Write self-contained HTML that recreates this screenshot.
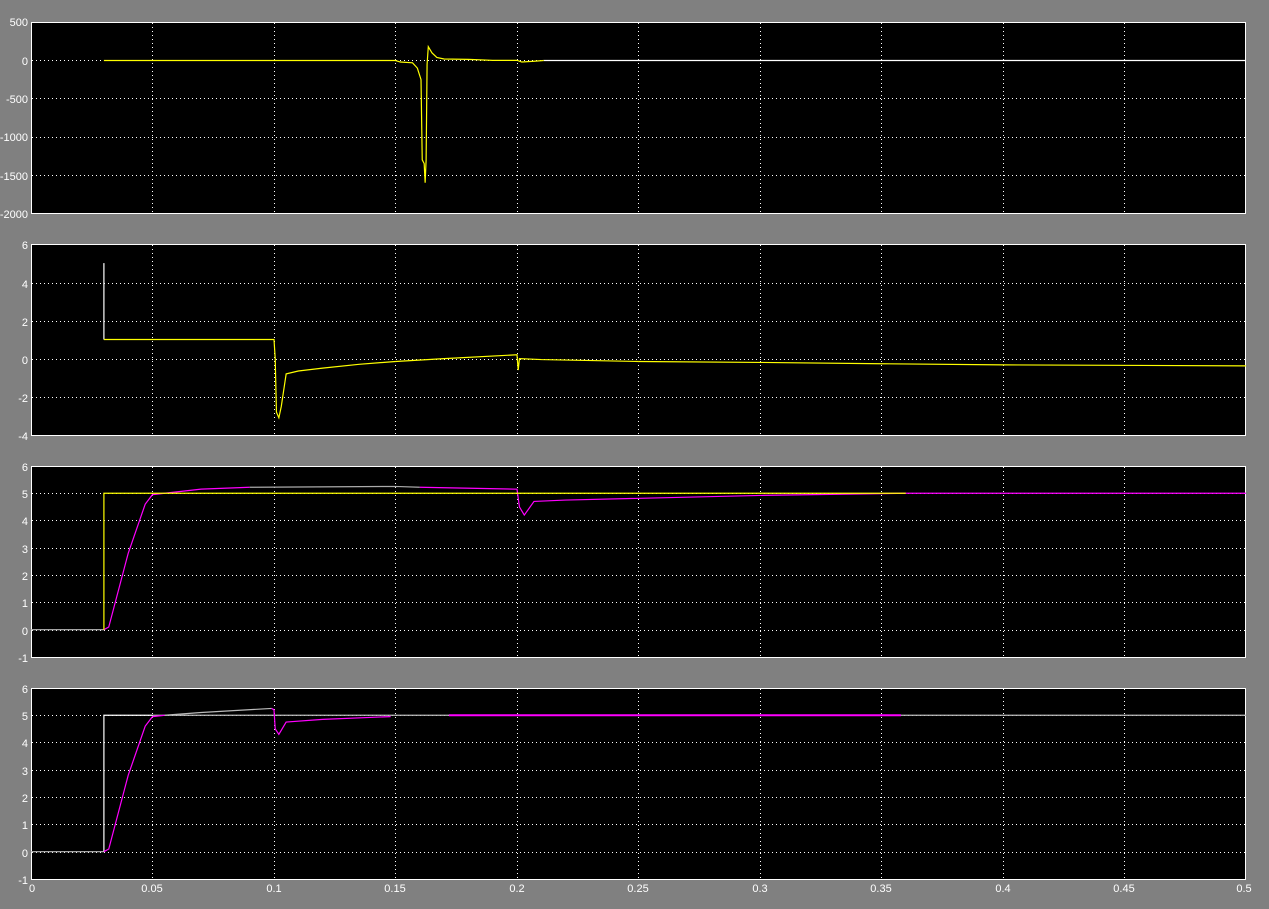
<!DOCTYPE html>
<html><head><meta charset="utf-8"><style>
html,body{margin:0;padding:0;background:#808080;}
svg{display:block}
text{font-family:"Liberation Sans",sans-serif;font-size:11px;fill:#fff}
.g{stroke:#fff;stroke-width:1;stroke-dasharray:1 3;fill:none}
path,line{vector-effect:non-scaling-stroke}
</style></head><body>
<svg width="1269" height="909" viewBox="0 0 1269 909" xmlns="http://www.w3.org/2000/svg">
<rect width="1269" height="909" fill="#808080"/>
<g fill="#000" stroke="#fff" stroke-width="1">
<rect x="31.5" y="22.5" width="1214" height="191"/>
<rect x="31.5" y="244.5" width="1214" height="191"/>
<rect x="31.5" y="466.5" width="1214" height="191"/>
<rect x="31.5" y="688.5" width="1214" height="191"/>
</g>
<g class="g">
<path d="M152.5 23V213M274.5 23V213M395.5 23V213M517.5 23V213M638.5 23V213M760.5 23V213M881.5 23V213M1003.5 23V213M1124.5 23V213"/>
<path d="M152.5 245V435M274.5 245V435M395.5 245V435M517.5 245V435M638.5 245V435M760.5 245V435M881.5 245V435M1003.5 245V435M1124.5 245V435"/>
<path d="M152.5 467V657M274.5 467V657M395.5 467V657M517.5 467V657M638.5 467V657M760.5 467V657M881.5 467V657M1003.5 467V657M1124.5 467V657"/>
<path d="M152.5 689V879M274.5 689V879M395.5 689V879M517.5 689V879M638.5 689V879M760.5 689V879M881.5 689V879M1003.5 689V879M1124.5 689V879"/>
<path d="M32 60.5H1245M32 98.5H1245M32 137.5H1245M32 175.5H1245"/>
<path d="M32 283.5H1245M32 321.5H1245M32 359.5H1245M32 397.5H1245"/>
<path d="M32 493.5H1245M32 520.5H1245M32 548.5H1245M32 575.5H1245M32 602.5H1245M32 630.5H1245"/>
<path d="M32 715.5H1245M32 742.5H1245M32 770.5H1245M32 797.5H1245M32 824.5H1245M32 852.5H1245"/>
</g>
<g transform="translate(31,60.5) scale(2430,-0.0764)" fill="none" stroke-width="1.2">
<path stroke="#ffff00" d="M0.03 0 L0.15 0 L0.152 -20 L0.157 -30 L0.159 -100 L0.1605 -250 L0.161 -1300 L0.1618 -1350 L0.1622 -1600 L0.1626 -1300 L0.163 -50 L0.1635 180 L0.165 100 L0.167 40 L0.17 20 L0.18 15 L0.19 2 L0.2 2 L0.202 -20 L0.207 -10 L0.211 0"/>
<path stroke="#fff" d="M0.211 0 L0.5 0"/>
</g>
<g transform="translate(31,358.6) scale(2430,-19.1)" fill="none" stroke-width="1.2">
<path stroke="#fff" d="M0.03 5 L0.03 1"/>
<path stroke="#ffff00" d="M0.03 1 L0.1 1 L0.1005 0 L0.101 -2.8 L0.102 -3.1 L0.103 -2.5 L0.105 -0.8 L0.11 -0.65 L0.12 -0.5 L0.135 -0.3 L0.15 -0.15 L0.17 0 L0.2 0.2 L0.2005 -0.6 L0.201 0 L0.21 -0.05 L0.25 -0.15 L0.3 -0.2 L0.35 -0.27 L0.4 -0.33 L0.5 -0.38"/>
</g>
<g transform="translate(31,629.7) scale(2430,-27.29)" fill="none" stroke-width="1.2">
<path stroke="#bbb" d="M0 0 L0.03 0"/>
<path stroke="#ff00ff" d="M0.03 0 L0.032 0.1 L0.04 2.8 L0.047 4.6 L0.05 4.95 L0.055 5 L0.07 5.15 L0.09 5.22"/>
<path stroke="#aaa" d="M0.09 5.22 L0.15 5.25 L0.16 5.22"/>
<path stroke="#ff00ff" d="M0.16 5.22 L0.2 5.15 L0.201 4.5 L0.203 4.2 L0.207 4.7 L0.22 4.75 L0.3 4.92 L0.36 5 L0.5 5"/>
<path stroke="#ffff00" d="M0.03 0 L0.03 5 L0.36 5"/>
</g>
<g transform="translate(31,851.7) scale(2430,-27.29)" fill="none" stroke-width="1.2">
<path stroke="#bbb" d="M0 0 L0.03 0"/>
<path stroke="#fff" d="M0.03 0 L0.03 5 L0.05 5"/>
<path stroke="#bbb" d="M0.05 5 L0.5 5"/>
<path stroke="#bbb" d="M0.055 5 L0.07 5.1 L0.099 5.25"/>
<path stroke="#ff00ff" d="M0.03 0 L0.032 0.1 L0.04 2.8 L0.047 4.6 L0.05 4.95 L0.055 5"/>
<path stroke="#ff00ff" d="M0.099 5.25 L0.1 5.2 L0.1005 4.5 L0.102 4.3 L0.105 4.75 L0.12 4.85 L0.148 4.95"/>
<path stroke="#ff00ff" stroke-width="2" d="M0.172 5 L0.358 5"/>
</g>
<g text-anchor="end">
<text x="28" y="26">500</text><text x="28" y="65">0</text><text x="28" y="103">-500</text><text x="28" y="141">-1000</text><text x="28" y="180">-1500</text><text x="28" y="218">-2000</text>
<text x="28" y="249">6</text><text x="28" y="288">4</text><text x="28" y="326">2</text><text x="28" y="364">0</text><text x="28" y="402">-2</text><text x="28" y="440">-4</text>
<text x="28" y="471">6</text><text x="28" y="498">5</text><text x="28" y="525">4</text><text x="28" y="553">3</text><text x="28" y="580">2</text><text x="28" y="607">1</text><text x="28" y="635">0</text><text x="28" y="662">-1</text>
<text x="28" y="693">6</text><text x="28" y="720">5</text><text x="28" y="747">4</text><text x="28" y="775">3</text><text x="28" y="802">2</text><text x="28" y="829">1</text><text x="28" y="857">0</text><text x="28" y="884">-1</text>
</g>
<g text-anchor="middle">
<text x="32" y="892">0</text><text x="152" y="892">0.05</text><text x="274" y="892">0.1</text><text x="395" y="892">0.15</text><text x="517" y="892">0.2</text><text x="638" y="892">0.25</text><text x="760" y="892">0.3</text><text x="881" y="892">0.35</text><text x="1003" y="892">0.4</text><text x="1124" y="892">0.45</text><text x="1244" y="892">0.5</text>
</g>
</svg>
</body></html>
